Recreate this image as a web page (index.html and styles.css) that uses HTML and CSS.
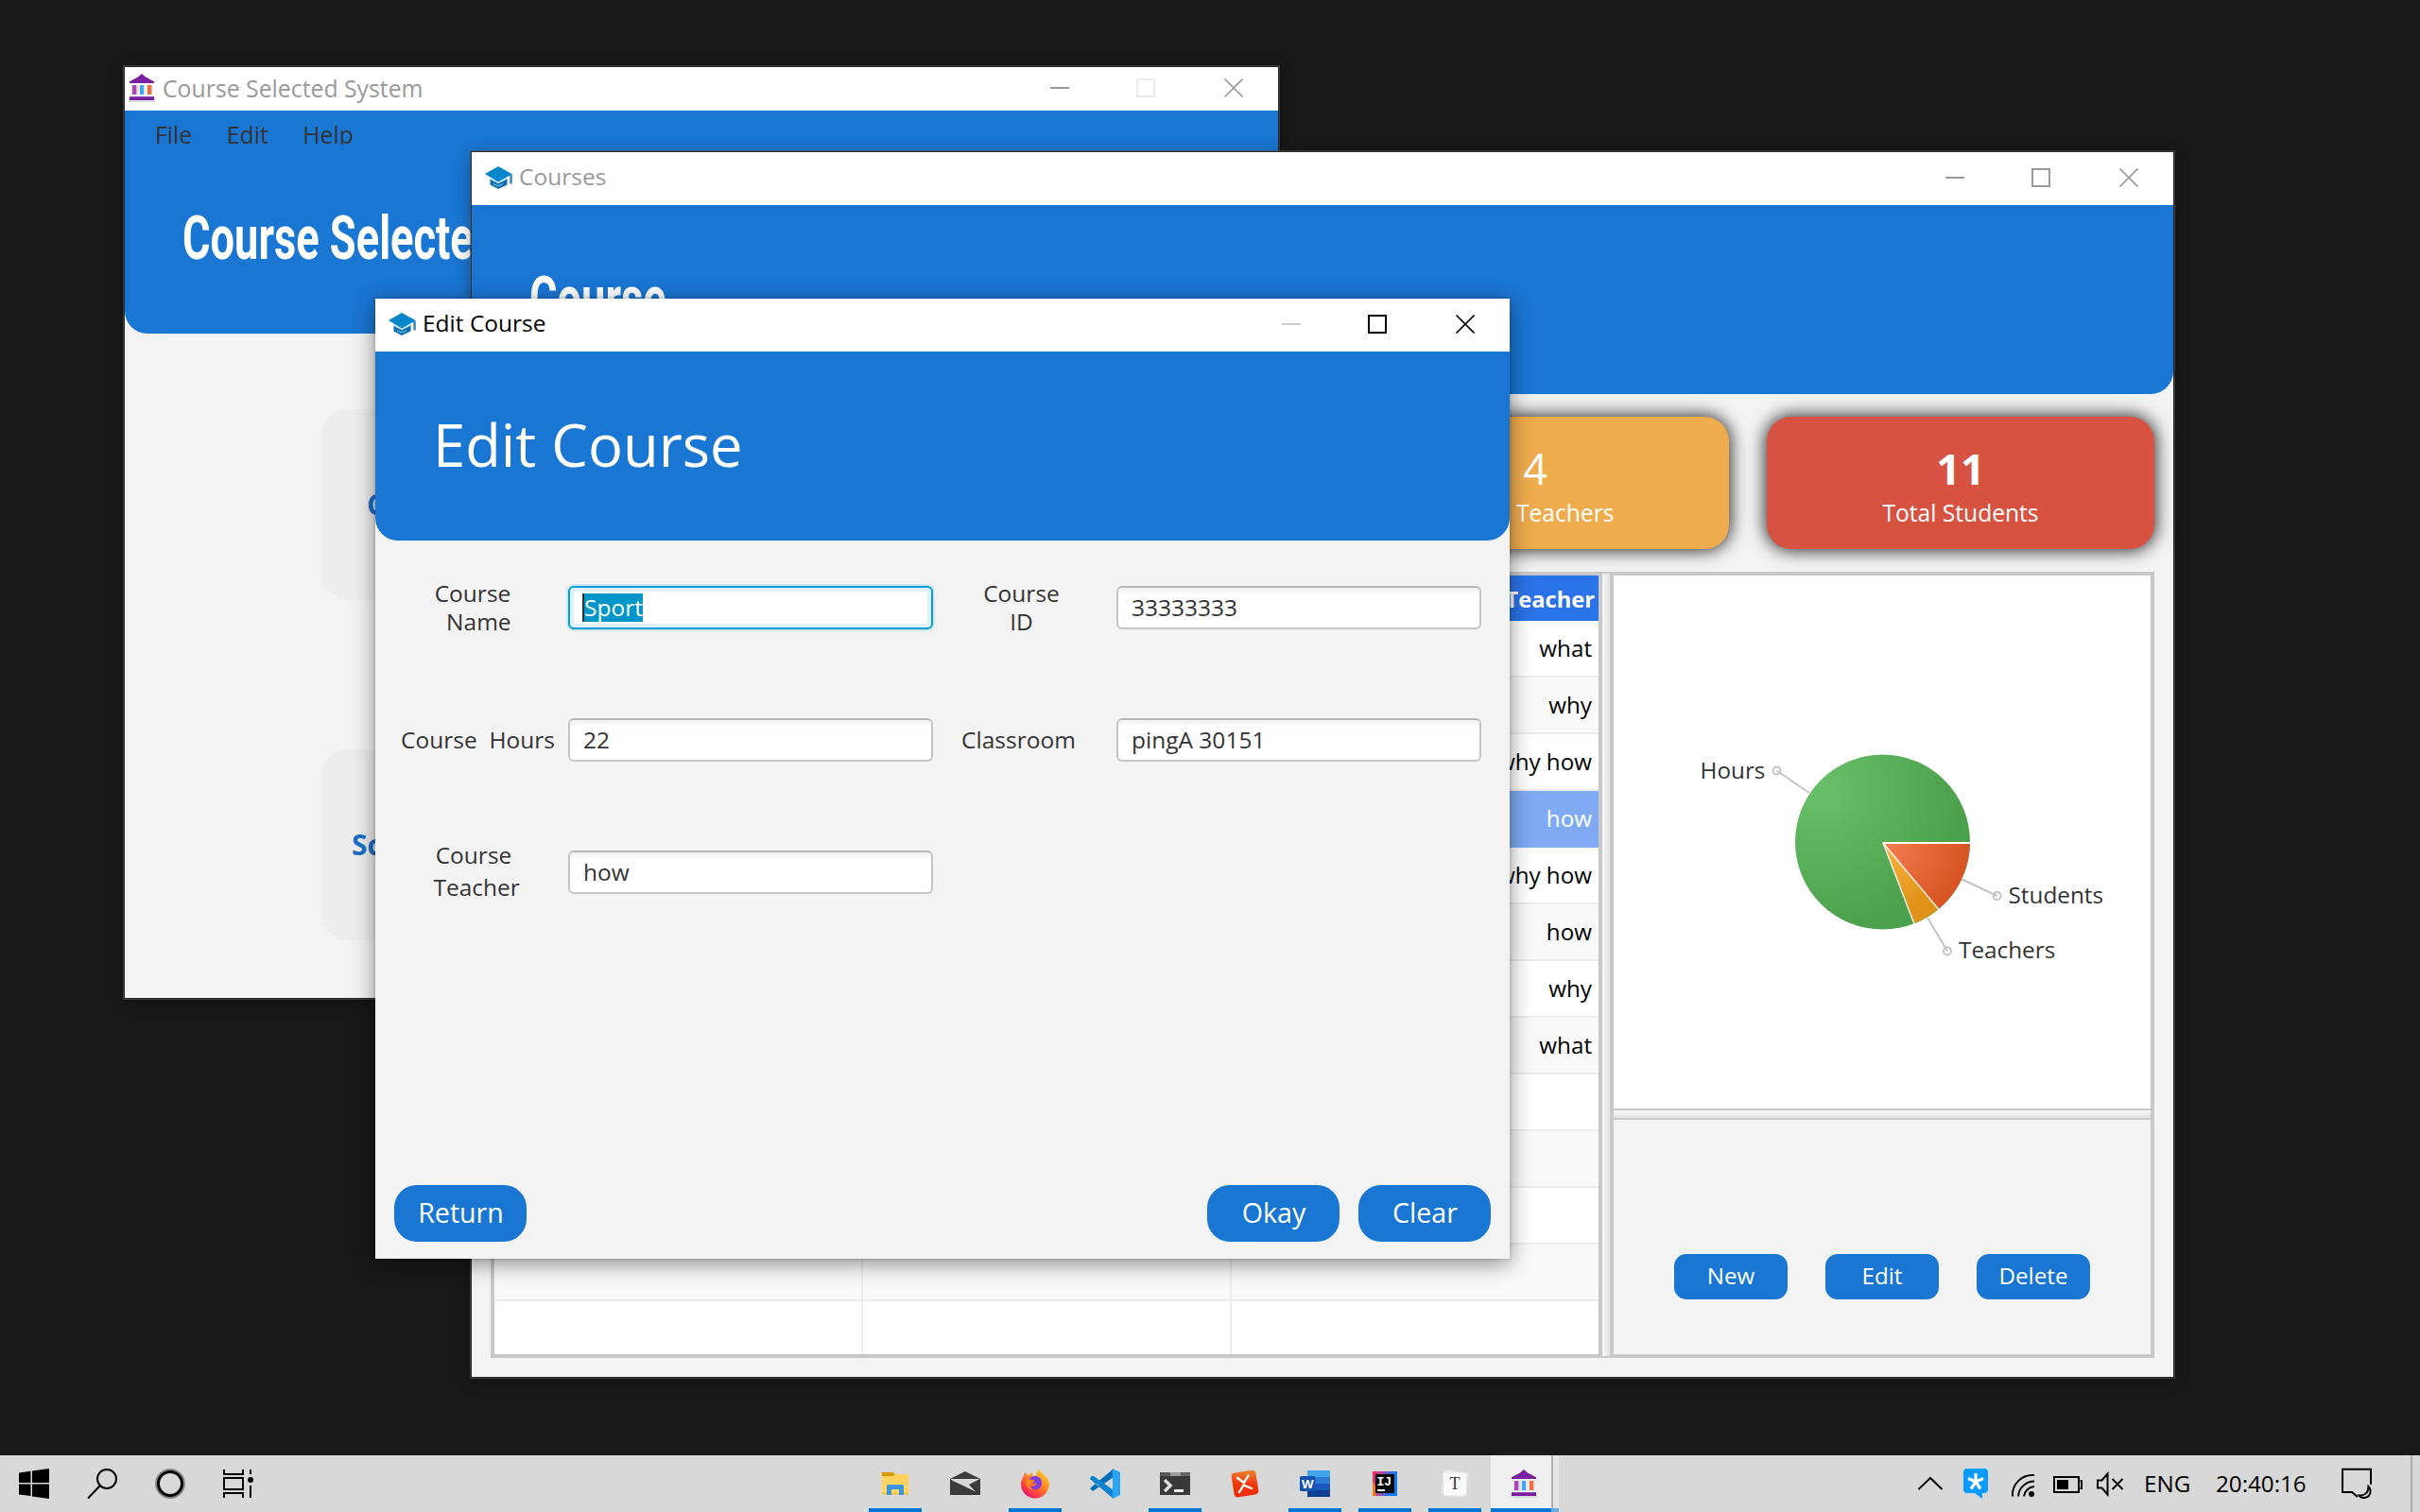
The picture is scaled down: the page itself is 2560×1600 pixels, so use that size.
FILE: index.html
```html
<!DOCTYPE html>
<html lang="en">
<head>
<meta charset="utf-8">
<title>Edit Course</title>
<link rel="stylesheet" href="styles.css">
</head>
<body>
<svg width="0" height="0" class="defs">
  <defs>
    <linearGradient id="capTop" x1="0" y1="0" x2="1" y2="1"><stop offset="0" stop-color="#0a86c4"/><stop offset="1" stop-color="#0288d1"/></linearGradient>
    <symbol id="cap" viewBox="0 0 30 24">
      <path d="M5.500 12.500v7L14 24l9.500-4.500v-7L14 17z" fill="#0b6fb3"/>
      <path d="M0 8 14 0l14.500 8v.6L14 16.500z" fill="url(#capTop)"/>
      <path d="M5.500 13.200 14 17.600l8.500-4.300" fill="none" stroke="#cfe4f2" stroke-width="1.300"/>
      <path d="M9 18.500c3 2.500 7 2.500 10 0" fill="none" stroke="#a9cfe8" stroke-width="1"/>
      <path d="M26.300 8.500h2.500v10h-2.500z" fill="#3a86bd"/>
    </symbol>
    <symbol id="bank" viewBox="0 0 28 30">
      <path d="M0 25.500h28V30H0z" fill="#ddd"/>
      <path d="M1 8.300 10 3.500 14 0l4 3.500 9 4.800V10H1z" fill="#7b1fa2"/>
      <path d="M3 12h7.500v10.500H3zM11.500 12h6v10.500h-6zM19 12h6.500v10.500H19z" fill="#dedede"/>
      <path d="M4 12h4.300v10H4z" fill="#ab47bc"/><path d="M12 12h4v10h-4z" fill="#42a5f5"/><path d="M20 12h4.200v10H20z" fill="#f0703f"/>
      <path d="M1 24.200h26V28H1z" fill="#7b1fa2"/>
    </symbol>
  </defs>
</svg>

<main class="desktop">
  <section class="window system">
    <header class="titlebar compact">
      <svg class="bank-icon"><use href="#bank"/></svg><span>Course Selected System</span>
      <svg class="controls" viewBox="0 0 204 20"><path d="M0 10h20" stroke="#999"/><rect x="92" y="1" width="18" height="18" stroke="#ebebeb"/><path d="m184.500.5 19 19m0-19-19 19" stroke="#999"/></svg>
    </header>
    <div class="banner">
      <nav class="menu"><span>File</span><span>Edit</span><span>Help</span></nav>
      <h1 class="condensed">Course Selected System</h1>
    </div>
    <div class="tiles">
      <div class="tile">Courses</div>
      <div class="tile second">Schedule</div>
    </div>
  </section>

  <section class="window courses">
    <header class="titlebar">
      <svg class="cap-icon"><use href="#cap"/></svg><span>Courses</span>
      <svg class="controls" viewBox="0 0 204 20"><path d="M0 10h20" stroke="#999"/><rect x="92" y="1" width="18" height="18" stroke="#999"/><path d="m184.500.5 19 19m0-19-19 19" stroke="#999"/></svg>
    </header>
    <div class="banner"><h1 class="condensed">Course</h1></div>
    <div class="stats">
      <div class="stat amber"><b class="thin">4</b><span>Total Teachers</span></div>
      <div class="stat red"><b>11</b><span>Total Students</span></div>
    </div>
    <div class="split">
      <div class="table">
        <div class="row head"><i></i><i></i><span>Teacher</span></div>
        <div class="row"><i></i><i></i><span>what</span></div>
        <div class="row"><i></i><i></i><span>why</span></div>
        <div class="row"><i></i><i></i><span>why how</span></div>
        <div class="row selected"><i></i><i></i><span>how</span></div>
        <div class="row"><i></i><i></i><span>why how</span></div>
        <div class="row"><i></i><i></i><span>how</span></div>
        <div class="row"><i></i><i></i><span>why</span></div>
        <div class="row"><i></i><i></i><span>what</span></div>
        <div class="row"><i></i><i></i><span></span></div>
        <div class="row"><i></i><i></i><span></span></div>
        <div class="row"><i></i><i></i><span></span></div>
        <div class="row"><i></i><i></i><span></span></div>
        <div class="row"><i></i><i></i><span></span></div>
      </div>
      <div class="divider"></div>
      <div class="side">
        <svg class="chart" viewBox="1707 609 568 564">
          <defs>
            <radialGradient id="green" gradientUnits="userSpaceOnUse" cx="1925" cy="835" r="150"><stop offset="0" stop-color="#6abf6a"/><stop offset=".5" stop-color="#5bb05b"/><stop offset="1" stop-color="#4da14d"/></radialGradient>
            <radialGradient id="orange" gradientUnits="userSpaceOnUse" cx="1992" cy="892" r="86"><stop offset="0" stop-color="#f67e53"/><stop offset="1" stop-color="#d85624"/></radialGradient>
            <radialGradient id="yellow" gradientUnits="userSpaceOnUse" cx="1992" cy="892" r="72"><stop offset="0" stop-color="#fbb445"/><stop offset="1" stop-color="#e09318"/></radialGradient>
          </defs>
          <circle cx="1991.500" cy="891" r="92.500" fill="url(#green)"/>
          <path d="M1992 892H2084A92.500 92.500 0 0 1 2050.500 962Z" fill="url(#orange)"/>
          <path d="M1992 892 2050.500 962A92.500 92.500 0 0 1 2025 977Z" fill="url(#yellow)"/>
          <path d="M2085 892H1991.500" stroke="#fff" stroke-width="2"/>
          <path d="M1992 892 2051 962.500M1992 892 2025.500 979" stroke="#fff" stroke-width="1.300"/>
          <g fill="none" stroke="#c4c4c4" stroke-width="2">
            <path d="M1914 839 1879.500 815.500M2075.500 930.500 2112.700 948M2039 971 2060 1006.500"/>
            <circle cx="1879.500" cy="815.500" r="4"/><circle cx="2112.700" cy="948" r="4"/><circle cx="2060" cy="1006.500" r="4"/>
          </g>
          <g class="chart-label"><text x="1798.500" y="824">Hours</text><text x="2124.500" y="956">Students</text><text x="2072" y="1014">Teachers</text></g>
        </svg>
        <div class="hdivider"></div>
        <div class="actions"><button>New</button><button>Edit</button><button>Delete</button></div>
      </div>
    </div>
  </section>

  <section class="window dialog">
    <header class="titlebar">
      <svg class="cap-icon"><use href="#cap"/></svg><span>Edit Course</span>
      <svg class="controls" viewBox="0 0 204 20"><path d="M0 10h20" stroke="#ccc"/><rect x="92" y="1" width="18" height="18" stroke="#000"/><path d="m184.500.5 19 19m0-19-19 19" stroke="#000"/></svg>
    </header>
    <div class="banner"><h1>Edit Course</h1></div>
    <div class="form">
      <label class="first">Course<br>  Name</label><div class="field focus"><mark>Sport</mark></div>
      <label class="right">Course<br>ID</label><div class="field">33333333</div>
      <label class="hours">Course  Hours</label><div class="field">22</div>
      <label class="room">Classroom</label><div class="field">pingA 30151</div>
      <label class="loose">Course<br> Teacher</label><div class="field">how</div>
    </div>
    <footer class="buttons"><button>Return</button><button class="push">Okay</button><button>Clear</button></footer>
  </section>
</main>

<footer class="taskbar">
  <svg class="start" viewBox="0 0 280 60">
    <path d="M20 18.500 32.500 16.700V29H20zM34 16.500 52 14v15H34zM20 30.500h12.500V43L20 41.500zM34 30.500h18V46l-18-2.600z"/>
    <g fill="none" stroke="#000" stroke-width="2"><circle cx="113" cy="25" r="10"/><path d="M105.500 32.500 93 45.500"/>
    <circle cx="180" cy="30" r="14" stroke="#8a8a8a" stroke-width="4"/><circle cx="180" cy="30" r="12.500" stroke-width="3"/>
    <path d="M237 15v5h20v-5M237 45v-5h20v5M237 24h20v12h-20zM265 15v5M265 32v13"/></g><circle cx="265" cy="26" r="3"/>
  </svg>
  <div class="apps">
    <div class="app on"><svg viewBox="0 0 32 32"><path d="M2 4h12l2 3-2 3H2z" fill="#dc9a00"/><path d="M2 8h12l2-2h14v21H2z" fill="#ffd35e"/><path d="M2 26h28v1.500H2z" fill="#f5bd2e"/><path d="M7 28V19q0-2 2-2h14q2 0 2 2v9h-5v-6h-8v6z" fill="#3a96dd"/></svg></div>
    <div class="app"><svg viewBox="0 0 32 32"><path d="M0 11 16 3l16 8v17H0z" fill="#3b3b3b"/><path d="M1 11h30.500L20 17l7 7.500L1 12z" fill="#d8d8d8"/></svg></div>
    <div class="app on"><svg viewBox="0 0 32 32"><defs><linearGradient id="fx" x1="1" y1="0" x2=".3" y2="1"><stop offset="0" stop-color="#ffe440"/><stop offset=".45" stop-color="#ff9520"/><stop offset=".75" stop-color="#ff4a3a"/><stop offset="1" stop-color="#e8156c"/></linearGradient></defs><path d="M20 0c1 5 10 7 11 16C31 25 24 31.500 16 31.500S1 25 1 16.500C1 12 3 10 4 8c0-1 0-3 1.500-4C7 7 8 7 10 6.500c2-2 3-1.500 4-2-1 2-1 3 0 4l3-1C18 5 18 2 20 0z" fill="url(#fx)"/><path d="M12 9c6-3 12 1 11 8-1 5-9 8-12 2 4 1 5-1 7-3l-7-1c-1-2-2-2-3-2z" fill="#7a3ee0"/><path d="M6 12c4-1 6 0 10 .5-1 2-3 2-5 3-1 3 0 5 3 7-5 0-8-4-8-10.500z" fill="#ff8a20"/></svg></div>
    <div class="app"><svg viewBox="0 0 32 32"><path d="M0 11 3 8l21 16v7L0 11zM24 1 0 21l3 3L25 9z" fill="#0070b8"/><path d="M0 10q2-3 4-2l21 15v9z" fill="#0a84cf"/><path d="M24 0 32 4v24l-8 4z" fill="#2aa5f5"/></svg></div>
    <div class="app on"><svg viewBox="0 0 32 32"><path d="M0 4h32v24H0z" fill="#393939"/><path d="M0 4h11v4H0z" fill="#585858"/><path d="M11 4h11v4H11z" fill="#9b9b9b"/><path d="M22 4h10v4H22z" fill="#666"/><path d="m5 12 6 6-6 6" fill="none" stroke="#ddd" stroke-width="3.500"/><path d="M15 22h10v3H15z" fill="#eee"/></svg></div>
    <div class="app"><svg viewBox="0 0 32 32"><defs><linearGradient id="xm" x1=".6" y1="0" x2=".4" y2="1"><stop offset="0" stop-color="#ee8030"/><stop offset=".5" stop-color="#f03a10"/><stop offset="1" stop-color="#ee2a08"/></linearGradient></defs><rect x="3" y="3" width="26" height="26" rx="4" fill="url(#xm)" transform="rotate(-9 16 16)"/><path d="m8 10 7 5 4.500-7.500M10 25l4.500-7.500L23 21" fill="none" stroke="#fff" stroke-width="2.400" stroke-linecap="round" stroke-linejoin="round"/></svg></div>
    <div class="app on"><svg viewBox="0 0 32 32"><path d="M8 2h24v7H8z" fill="#41a5ee"/><path d="M8 9h24v7H8z" fill="#2b7cd3"/><path d="M8 16h24v7H8z" fill="#185abd"/><path d="M8 23h24v7H8z" fill="#103f91"/><rect y="8" width="16.500" height="16" rx="1.500" fill="#1553b0"/><text x="8.200" y="21" class="word-w">W</text></svg></div>
    <div class="app on"><svg viewBox="0 0 32 32"><defs><linearGradient id="ij" x1="0" y1="0" x2="1" y2=".2"><stop offset="0" stop-color="#fe2857"/><stop offset=".45" stop-color="#9a4fa8"/><stop offset=".7" stop-color="#3b6ae0"/><stop offset="1" stop-color="#087cfa"/></linearGradient></defs><path d="M3 3h26v26H3z" fill="url(#ij)"/><path d="M3 14v15h3l3-6z" fill="#f97a12"/><path d="M6 6h20v20H6z" fill="#080808"/><text x="7.500" y="17.500" class="ij-text">IJ</text><path d="M8 22h8v2H8z" fill="#fff"/></svg></div>
    <div class="app on"><svg viewBox="0 0 32 32"><rect x="3" y="3" width="26" height="26" rx="3" fill="#efefef" transform="rotate(8 16 16)"/><rect x="3.500" y="4" width="25" height="25" rx="3" fill="#fafafa" stroke="#e3e3e3"/><text x="16" y="22" class="typora">T</text></svg></div>
    <div class="app-active"><svg><use href="#bank"/></svg></div>
  </div>
  <div class="tray">
    <svg class="tray-icons" viewBox="0 0 230 60">
      <g fill="none" stroke="#000" stroke-width="2"><path d="M9.500 36 22 24l12.500 12"/>
      <path d="M109 43.500A21 21 0 0 1 132 21M115 43.500A17 17 0 0 1 132 27.500M121 43.500A12 12 0 0 1 132 33"/>
      <path d="M153 23h26v16h-26zM180.500 27h1.500v8h-1.500M199 26.500h4.500l6-7v22l-6-7H199zM214.500 25l11 11m0-11-11 11"/></g>
      <path d="M156 26h12v10h-12z"/><circle cx="129" cy="41" r="3"/>
      <path d="M61 14h18q4 0 4 4v18q0 4-4 4h-2v6l-8-6h-8q-4 0-4-4V18q0-4 4-4z" fill="#0a9bff"/>
      <path d="M70 19v9m-8-3.500 8 3.500 8-3.500M70 28l-5 7.500M70 28l5 7.500" fill="none" stroke="#fff" stroke-width="3.200"/>
    </svg>
    <span class="lang">ENG</span><span class="clock">20:40:16</span>
    <svg class="notice" viewBox="0 0 34 34"><path d="M31 18V1.800H1V26h10l6 5" fill="none" stroke="#000" stroke-width="2"/><path d="M28.500 20c4 4 2 12-5 12-2 0-4-1-5-2.500 6 .5 10-3 10-9.500z" fill="none" stroke="#000" stroke-width="2"/></svg>
    <div class="peek"></div>
  </div>
</footer>
</body>
</html>
```

FILE: styles.css
```css
* { box-sizing: border-box; }
body { margin: 0; width: 2560px; height: 1600px; overflow: hidden; background: #191919; font: 24.500px/30px "Open Sans", "Noto Sans", sans-serif; color: #333; display: flex; flex-direction: column; }
.defs { position: absolute; }
.desktop { position: relative; height: 1540px; }
h1 { margin: 0; font-weight: 400; color: #fff; }
button { border: 0; padding: 0; background: #1a76d3; color: #fff; font: inherit; }

.window { position: absolute; background: #f3f3f3; display: flex; flex-direction: column; box-shadow: 0 0 0 1px rgba(30,30,30,.7), 0 0 0 2px rgba(85,85,85,.6), 0 3px 16px rgba(0,0,0,.4); }
.system { left: 132px; top: 71px; width: 1220px; height: 985px; }
.courses { left: 499px; top: 161px; width: 1800px; height: 1296px; }
.dialog { left: 397px; top: 316px; width: 1200px; height: 1016px; box-shadow: 0 0 0 2px rgba(0,0,0,.06), 0 5px 22px rgba(0,0,0,.45); }

.titlebar { height: 56px; flex: none; background: #fff; display: flex; align-items: center; padding: 0 37px 2px 14px; gap: 6px; color: #999; font-size: 24.500px; }
.titlebar span { padding-bottom: 2px; }
.titlebar.compact { height: 46px; padding: 0 37px 2px 4px; gap: 8px; font-size: 24.800px; }
.titlebar.compact span { padding-bottom: 1px; }
.dialog .titlebar { color: #000; }
.cap-icon { width: 30px; height: 24px; }
.bank-icon { width: 28px; height: 30px; }
.controls { width: 204px; height: 20px; margin-left: auto; fill: none; stroke-width: 2; }
.controls path:last-child { stroke-width: 1.600; }

.banner { background: #1a76d3; border-radius: 0 0 24px 24px; flex: none; height: 200px; }
.system .banner { height: 236px; }
.menu { display: flex; height: 36px; overflow: hidden; padding: 10px 0 0 32px; gap: 36.500px; font-size: 24.800px; }
.condensed { font: 700 64.600px/60px Roboto, sans-serif; white-space: nowrap; transform: scaleX(.7); transform-origin: 0 0; padding-top: 69px; margin-left: 61px; }
.dialog .banner { display: flex; align-items: center; padding: 0 0 4px 61px; }
.dialog h1 { font-size: 61.500px; line-height: 70px; }

.tiles { display: flex; flex-direction: column; gap: 158px; padding: 80px 0 0 208px; }
.tile { width: 300px; height: 202px; border-radius: 28px; background: #ededed; color: #1a6fc9; font-size: 30px; font-weight: 700; line-height: 202px; padding-left: 48px; }
.tile.second { padding-left: 32px; }

.stats { display: flex; justify-content: flex-end; gap: 40px; padding: 24px 20px; flex: none; }
.stat { width: 410px; height: 140px; border-radius: 26px; box-shadow: 0 0 18px 2px rgba(0,0,0,.8); color: #fff; text-align: center; display: flex; flex-direction: column; font-size: 24.600px; padding-top: 31px; }
.stat b { font-size: 45px; line-height: 48px; }
.stat b.thin { font-weight: 500; }
.stat span { line-height: 45px; }
.amber { background: #eeac4d; }
.red { background: #d75240; }

.split { margin: 0 20px; height: 832px; display: flex; border: 4px solid #c8c8c8; flex: none; }
.table { width: 1168px; overflow: hidden; background: #fff; color: #000; font-size: 24.200px; }
.row { display: grid; grid-template-columns: 390px 390px 388px; height: 60px; border-bottom: 2px solid #ececec; }
.row:nth-child(odd) { background: #f9f9f9; }
.row i { border-right: 2px solid #ececec; }
.row span { text-align: right; padding-right: 7px; line-height: 57px; }
.row.head { height: 48px; background: #2b73e8; border: 0; color: #fff; font-weight: 700; font-size: 23.700px; }
.row.head span { padding-right: 4px; line-height: 50px; }
.row.selected { background: #80abf4; color: #fff; border-color: #80abf4; }
.divider { width: 16px; border: solid #c8c8c8; border-width: 0 4px; background: linear-gradient(90deg, #f8f8f8, #e0e0e0); margin: -2px 0; }
.side { width: 568px; display: flex; flex-direction: column; }
.chart { width: 568px; height: 564px; background: #fff; }
.chart-label { fill: #333; font-size: 24.300px; }
.hdivider { height: 12px; border: solid #c8c8c8; border-width: 2px 0; background: linear-gradient(#f8f8f8, #e0e0e0); }
.actions { display: flex; gap: 40px; padding: 142px 0 0 64px; }
.actions button { width: 120px; height: 48px; border-radius: 13px; font-size: 24.200px; line-height: 46px; padding-bottom: 2px; }

.form { display: grid; grid-template-columns: 204px 386px 194px 386px; grid-auto-rows: 140px; align-items: center; margin-top: 1px; }
.form label { text-align: center; white-space: pre; padding-bottom: 1px; }
.form .first { padding-left: 2px; }
.form .right { padding-right: 7px; }
.form .room { padding-right: 13px; }
.form .hours { padding-left: 13px; }
.form .loose { line-height: 34px; padding: 0 0 3px 4px; }
.field { height: 46px; border: 2px solid #c6c6c6; border-top-color: #b8b8b8; border-radius: 6px; background: linear-gradient(#f0f0f0, #fff 8px); padding-left: 14px; line-height: 42px; }
.field.focus { border-color: #039ed3; background: #fff; box-shadow: 0 0 0 2px rgba(3,158,211,.15), inset 0 0 0 4px #def1fa; padding-left: 13px; }
mark { display: inline-block; background: #0096c9; color: #fff; height: 30px; line-height: 29px; border-left: 2px solid #333; vertical-align: middle; margin-top: -4px; }
.buttons { margin-top: auto; display: flex; gap: 20px; padding: 0 20px 18px; }
.buttons button { width: 140px; height: 60px; border-radius: 24px; font-size: 28.600px; line-height: 58px; padding: 0 0 2px 1px; }
.push { margin-left: auto; }

.taskbar { height: 60px; background: #d8d8d8; display: flex; color: #000; }
.start { width: 280px; height: 60px; }
.apps { display: flex; margin-left: 630px; }
.app { width: 74px; height: 60px; padding: 14px 21px 0; }
.app svg { width: 32px; height: 32px; display: block; }
.app.on { background: linear-gradient(#0078d7, #0078d7) 9px 56px / 56px 4px no-repeat; }
.app-active { width: 72px; height: 60px; margin-left: 1px; padding: 15px 0 0 21px; background: linear-gradient(90deg, #0078d7 64px, #65aee8 64px) 0 56px / 72px 4px no-repeat, linear-gradient(90deg, #efefef 64px, #b0b0b0 64px 66px, #e6e6e6 66px); }
.app-active svg { width: 28px; height: 30px; }
.word-w { font: 700 13px "Open Sans", sans-serif; fill: #fff; text-anchor: middle; }
.ij-text { font: 700 13px "Liberation Mono", monospace; fill: #fff; }
.typora { font: 18px "Liberation Serif", serif; fill: #333; text-anchor: middle; }
.tray { margin-left: auto; display: flex; width: 540px; line-height: 59px; font-size: 24.200px; }
.tray-icons { width: 230px; height: 60px; margin-right: 18px; flex: none; }
.lang { width: 76px; }
.clock { width: 133px; }
.notice { width: 34px; height: 34px; margin-top: 13px; flex: none; }
.peek { width: 2px; height: 60px; background: #aaa; margin-left: 39px; flex: none; }
```
